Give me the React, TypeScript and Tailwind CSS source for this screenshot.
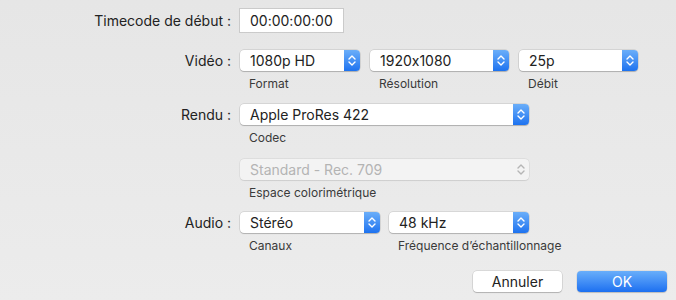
const FONT = { fontFamily: '"Inter", "Helvetica Neue", Arial, sans-serif' };

function Chevrons({ disabled }: { disabled?: boolean }) {
  return (
    <svg width="8" height="13" viewBox="0 0 8 13" fill="none">
      <path d="M1 5L4 2L7 5" stroke={disabled ? '#b5b5b5' : '#ffffff'} strokeWidth="1.4" strokeLinecap="round" strokeLinejoin="round" />
      <path d="M1 8L4 11L7 8" stroke={disabled ? '#b5b5b5' : '#ffffff'} strokeWidth="1.4" strokeLinecap="round" strokeLinejoin="round" />
    </svg>
  );
}

function Popup({ value, width, disabled }: { value: string; width: string; disabled?: boolean }) {
  return (
    <div
      className={`${width} h-[21px] flex items-stretch rounded-[4px] ${disabled ? 'bg-[#f3f3f3] shadow-[0_0_0_0.5px_rgba(0,0,0,0.08),0_0.5px_1px_rgba(0,0,0,0.08)]' : 'bg-white shadow-[0_0_0_0.5px_rgba(0,0,0,0.16),0_1px_1px_rgba(0,0,0,0.18)]'}`}
    >
      <span className={`flex-1 pl-[10px] text-[14px] leading-[21px] truncate ${disabled ? 'text-[#b4b4b4]' : 'text-[#222]'}`}>{value}</span>
      <span
        className={`w-[16px] flex items-center justify-center rounded-r-[4px] ${disabled ? '' : 'bg-gradient-to-b from-[#6aaef9] to-[#1c72ef]'}`}
      >
        <Chevrons disabled={disabled} />
      </span>
    </div>
  );
}

function Sub({ children, width }: { children: string; width: string }) {
  return <div className={`${width} pl-[9px] text-[12px] leading-[14px] text-[#3a3a3a] whitespace-nowrap`}>{children}</div>;
}

function Label({ children }: { children: string }) {
  return <div className="w-[231px] text-right text-[14px] text-[#222] leading-[21px] whitespace-nowrap">{children}</div>;
}

export default function App() {
  return (
    <div
      className="w-[676px] h-[300px] bg-gradient-to-b from-[#e6e6e6] to-[#ececec] pt-[9px] pr-[9px] overflow-hidden [font-feature-settings:'calt'_0]"
      style={FONT}
    >
      <div className="flex items-center h-[23px] gap-[9px]">
        <Label>Timecode de début :</Label>
        <div className="w-[103px] h-[23px] bg-white shadow-[0_0_0_1px_rgba(0,0,0,0.12)] pl-[10px] text-[14px] leading-[23px] text-[#222]">
          00:00:00:00
        </div>
      </div>

      <div className="mt-[18px] flex gap-[9px]">
        <Label>Vidéo :</Label>
        <div className="flex flex-col">
          <div className="flex gap-[10px]">
            <Popup value="1080p HD" width="w-[120px]" />
            <Popup value="1920x1080" width="w-[139px]" />
            <Popup value="25p" width="w-[119px]" />
          </div>
          <div className="flex gap-[10px] mt-[6px]">
            <Sub width="w-[120px]">Format</Sub>
            <Sub width="w-[139px]">Résolution</Sub>
            <Sub width="w-[119px]">Débit</Sub>
          </div>
        </div>
      </div>

      <div className="mt-[13px] flex gap-[9px]">
        <Label>Rendu :</Label>
        <div className="flex flex-col">
          <Popup value="Apple ProRes 422" width="w-[289px]" />
          <div className="mt-[6px]">
            <Sub width="w-[289px]">Codec</Sub>
          </div>
          <div className="mt-[14px]">
            <Popup value="Standard - Rec. 709" width="w-[289px]" disabled />
          </div>
          <div className="mt-[6px]">
            <Sub width="w-[289px]">Espace colorimétrique</Sub>
          </div>
        </div>
      </div>

      <div className="mt-[12px] flex gap-[9px]">
        <Label>Audio :</Label>
        <div className="flex flex-col">
          <div className="flex gap-[9px]">
            <Popup value="Stéréo" width="w-[140px]" />
            <Popup value="48 kHz" width="w-[140px]" />
          </div>
          <div className="flex gap-[9px] mt-[6px]">
            <Sub width="w-[140px]">Canaux</Sub>
            <Sub width="w-[140px]">Fréquence d’échantillonnage</Sub>
          </div>
        </div>
      </div>

      <div className="mt-[18px] flex justify-end gap-[15px]">
        <button className="w-[89px] h-[21px] rounded-[4px] bg-white shadow-[0_0_0_0.5px_rgba(0,0,0,0.16),0_1px_1px_rgba(0,0,0,0.18)] text-[14px] text-[#222] leading-[21px]">
          Annuler
        </button>
        <button className="w-[90px] h-[21px] rounded-[4px] bg-gradient-to-b from-[#69aefa] to-[#1b6ff0] shadow-[0_0_0_0.5px_rgba(0,0,0,0.1),0_1px_1px_rgba(0,0,0,0.15)] text-[14px] text-white leading-[21px]">
          OK
        </button>
      </div>
    </div>
  );
}
